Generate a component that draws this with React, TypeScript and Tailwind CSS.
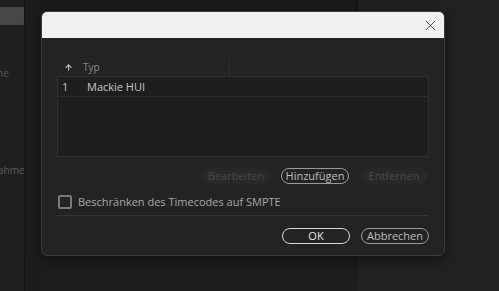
import { X, ArrowUp } from "lucide-react";

const font = { fontFamily: '"Open Sans", "Noto Sans", sans-serif' };

function PillButton({
  label,
  disabled,
  primary,
}: {
  label: string;
  disabled?: boolean;
  primary?: boolean;
}) {
  if (disabled) {
    return (
      <div className="flex h-[16px] w-[68px] items-center justify-center rounded-full bg-[#282828] text-[11px] text-[#4a4a4a]">
        {label}
      </div>
    );
  }
  return (
    <div
      className={`flex h-[16px] w-[68px] items-center justify-center rounded-full border text-[11px] ${
        primary ? "border-[#d8d8d8] text-[#e6e6e6]" : "border-[#9a9a9a] text-[#bdbdbd]"
      }`}
    >
      {label}
    </div>
  );
}

export default function App() {
  return (
    <div className="relative flex h-[291px] w-[499px] overflow-hidden bg-[#1e1e1e]" style={font}>
      {/* background panels */}
      <div className="flex w-[24px] flex-col overflow-hidden bg-[#1f1f1f] text-[10px] text-[#5a5a5a]">
        <div className="mt-[7px] h-[18px] bg-[#474747]" />
        <div className="mt-[41px] -ml-[3px] whitespace-nowrap">he</div>
        <div className="mt-[82px] -ml-[2px] whitespace-nowrap">ahme</div>
      </div>
      <div className="w-[1px] bg-[#151515]" />
      <div className="w-[16px] bg-[#1c1c1c]" />
      <div className="flex flex-1 flex-col">
        <div className="flex h-[11px]">
          <div className="w-[316px] bg-[#1a1a1a]" />
          <div className="w-[1px] bg-[#141414]" />
          <div className="flex-1 bg-[#222222]" />
        </div>
        <div className="flex flex-1">
          <div className="w-[317px] bg-[#1e1e1e]" />
          <div className="flex-1 bg-[#222222]" />
        </div>
      </div>

      {/* dialog */}
      <div className="absolute left-[41px] top-[11px] flex h-[245px] w-[404px] flex-col overflow-hidden rounded-[6px] border border-[#3a3a3a] bg-[#232323] shadow-[0_4px_16px_rgba(0,0,0,0.5)]">
        <div className="flex h-[26px] items-center justify-end bg-[#f3f0f0] pr-[5px]">
          <X size={17} strokeWidth={1.1} className="text-[#222]" />
        </div>
        <div className="flex flex-1 flex-col px-[15px] pt-[21px]">
          <div className="flex h-[17px] items-center text-[10px] text-[#8a8a8a]">
            <div className="flex w-[22px] justify-center">
              <ArrowUp size={9} strokeWidth={3} className="text-[#bbbbbb]" />
            </div>
            <div className="flex h-full w-[151px] items-center border-r border-[#2e2e2e] pl-[4px]">Typ</div>
          </div>
          <div className="h-[81px] border border-[#2f2f2f] bg-[#1e1e1e]">
            <div className="flex h-[20px] items-center border-b border-[#2c2c2c] pt-[2px] text-[11px] text-[#c8c8c8]">
              <div className="w-[29px] pl-[4px]">1</div>
              <div>Mackie HUI</div>
            </div>
          </div>
          <div className="mt-[11px] flex justify-end gap-[11px] pr-[1px]">
            <PillButton label="Bearbeiten" disabled />
            <PillButton label="Hinzufügen" />
            <PillButton label="Entfernen" disabled />
          </div>
          <div className="mt-[11px] flex h-[14px] items-center gap-[6px] pl-[1px]">
            <div className="h-[14px] w-[14px] rounded-[2px] border-[2px] border-[#7a7a7a]" />
            <div className="text-[11px] leading-[14px] text-[#a8a8a8]">Beschränken des Timecodes auf SMPTE</div>
          </div>
          <div className="mt-[6px] h-[1px] bg-[#333333]" />
          <div className="mt-[12px] flex justify-end gap-[11px]">
            <PillButton label="OK" primary />
            <PillButton label="Abbrechen" />
          </div>
        </div>
      </div>
    </div>
  );
}
